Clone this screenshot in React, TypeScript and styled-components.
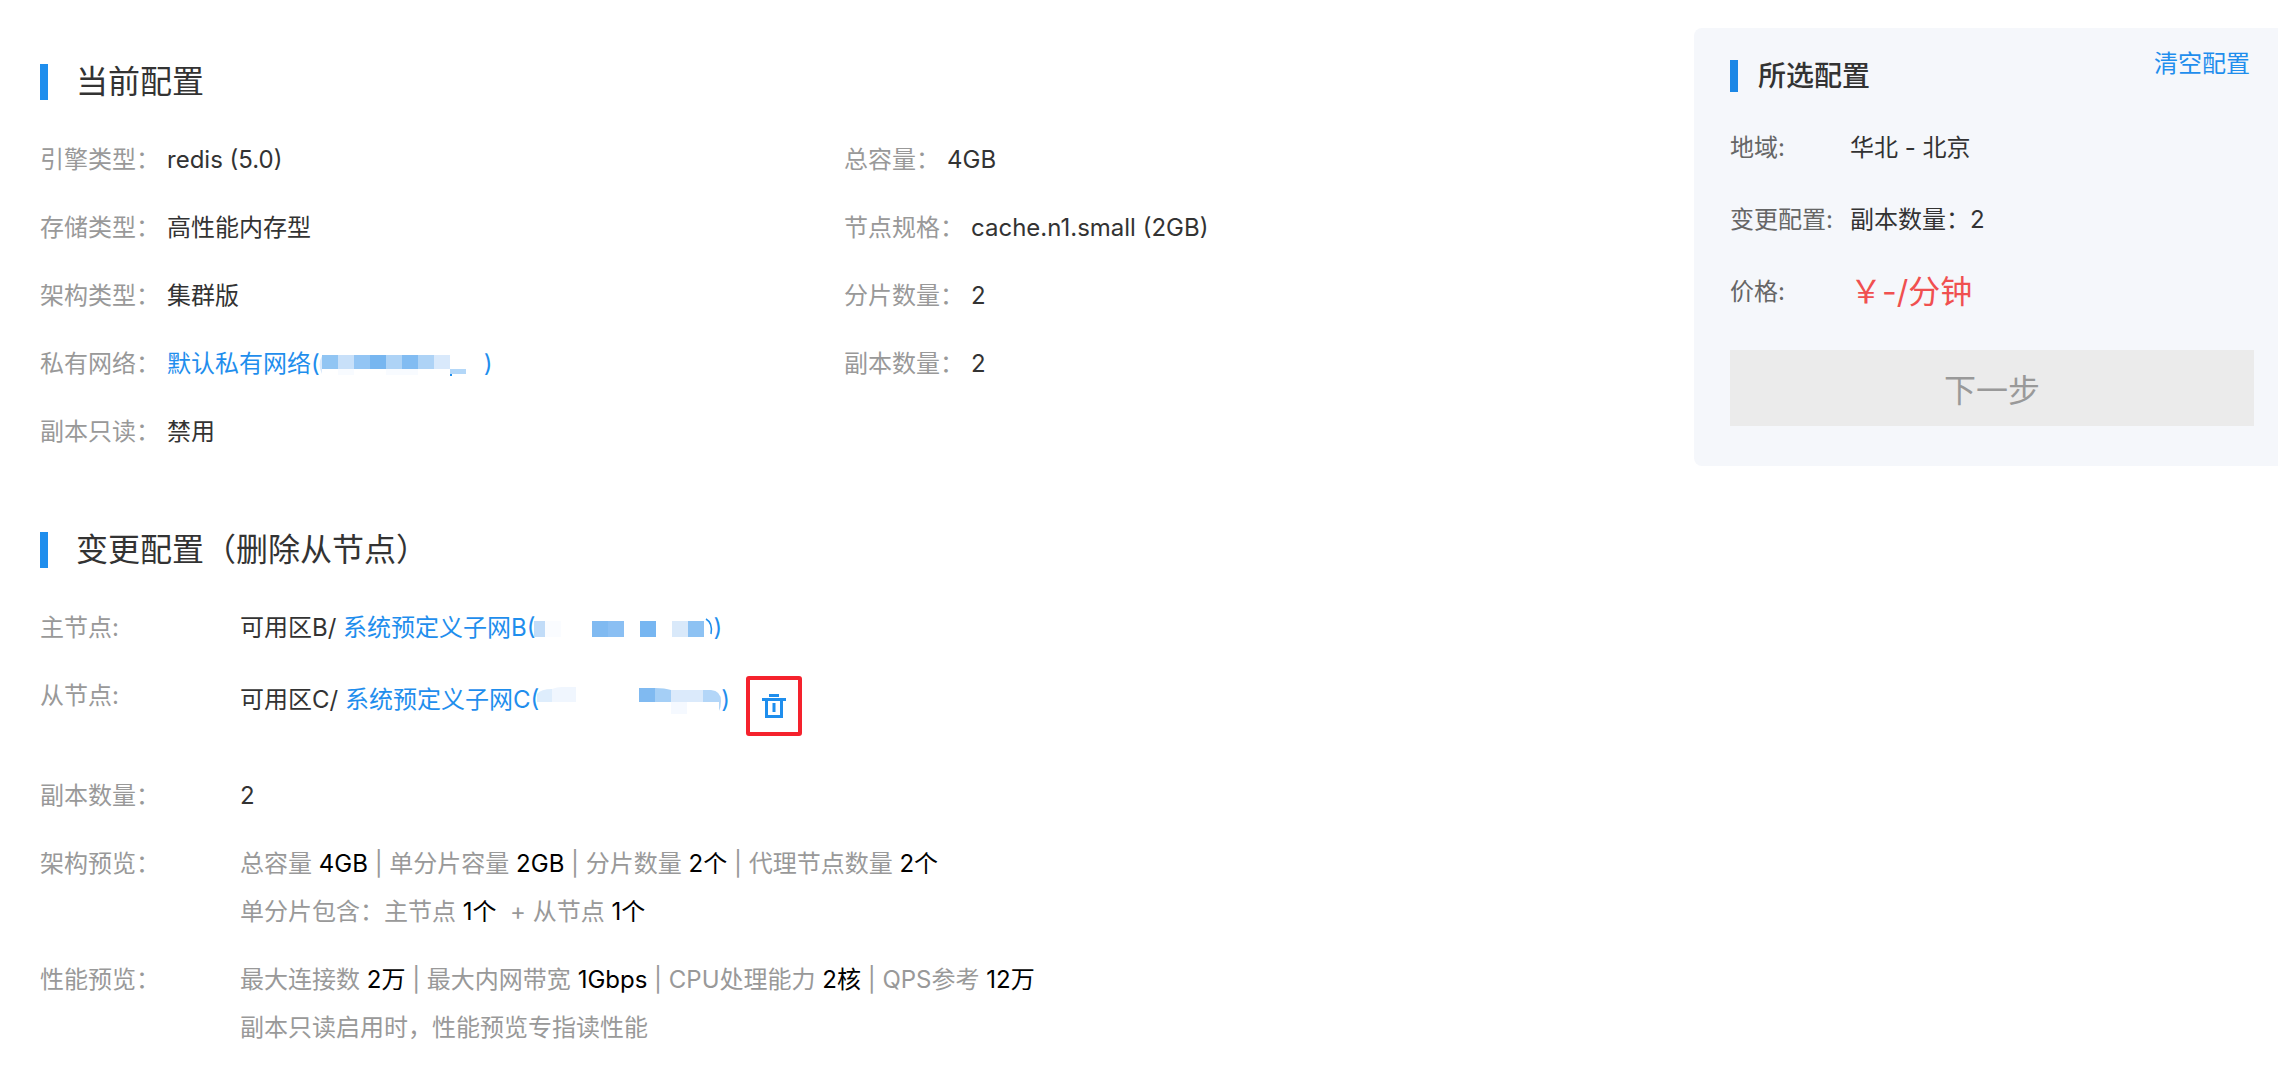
import React from 'react';
import styled, { createGlobalStyle } from 'styled-components';

const GlobalStyle = createGlobalStyle`
  * { box-sizing: border-box; }
  body {
    margin: 0;
    background: #fff;
    color: #333;
    font-family: Inter, "Noto Sans CJK SC", sans-serif;
    font-size: 24px;
    line-height: 48px;
  }
  dl, dd, h2, p { margin: 0; }
`;

const Page = styled.div`
  display: grid;
  grid-template-columns: minmax(0, 1fr) 584px;
  align-items: start;
  column-gap: 46px;
  padding: 28px 0 14px 40px;
`;

const Main = styled.main`
  display: grid;
  gap: 76px;
  padding-top: 36px;
`;

const SectionTitle = styled.h2`
  display: flex;
  align-items: center;
  gap: 28px;
  height: 36px;
  margin-bottom: 36px;
  font-size: 32px;
  font-weight: 400;

  &::before {
    content: '';
    width: 8px;
    height: 36px;
    background: #1f8eed;
  }
`;

const Columns = styled.div`
  display: grid;
  grid-template-columns: 1fr 1fr;
  align-items: start;
`;

const List = styled.dl`
  display: grid;
  gap: 20px;
`;

const Row = styled.div<{ $labelWidth?: number; $minHeight?: number }>`
  display: grid;
  grid-template-columns: ${(p) => (p.$labelWidth ? `${p.$labelWidth}px` : 'auto')} minmax(0, 1fr);
  column-gap: ${(p) => (p.$labelWidth ? 0 : 7)}px;
  align-items: start;
  min-height: ${(p) => p.$minHeight ?? 48}px;
`;

const Label = styled.dt`
  color: #999;
  white-space: nowrap;
`;

const Value = styled.dd`
  white-space: nowrap;
`;

const ActionValue = styled(Value)`
  display: flex;
  align-items: flex-start;
  gap: 16px;
  padding-top: 4px;
`;

const Muted = styled.p`
  color: #999;
`;

const Num = styled.span`
  color: #000;
`;

const Link = styled.a`
  color: #1f8eed;
  text-decoration: none;
`;

const Mask = styled.svg`
  display: inline-block;
  height: 28px;
  margin-left: -2px;
  vertical-align: middle;
`;

const DeleteButton = styled.button`
  display: flex;
  align-items: center;
  justify-content: center;
  width: 56px;
  height: 60px;
  padding: 0;
  border: 4px solid #f5222d;
  border-radius: 3px;
  background: none;
  color: #1f8eed;
`;

const Summary = styled.aside`
  padding: 32px 24px 40px 36px;
  border-radius: 8px 0 0 8px;
  background: #f5f7fb;
`;

const SummaryHead = styled.div`
  display: flex;
  justify-content: space-between;
  align-items: flex-start;
  margin-bottom: 32px;
`;

const SummaryTitle = styled.h2`
  display: flex;
  align-items: center;
  gap: 20px;
  font-size: 28px;
  line-height: 32px;
  font-weight: 500;

  &::before {
    content: '';
    width: 8px;
    height: 32px;
    background: #1b87e6;
  }
`;

const ClearLink = styled(Link)`
  padding-right: 4px;
  line-height: 8px;
`;

const SummaryList = styled.dl`
  display: grid;
  gap: 24px;
  margin-bottom: 34px;
`;

const SummaryLabel = styled(Label)`
  color: #666;
`;

const Price = styled(Value)`
  color: #f05050;
  font-size: 32px;
`;

const NextButton = styled.button`
  display: block;
  width: 100%;
  height: 76px;
  border: 0;
  background: #ebebeb;
  color: #999;
  font-family: inherit;
  font-size: 32px;
`;

type Block = [x: number, y: number, w: number, h: number, fill: string];

const vpcBlocks: Block[] = [
  [4, 4, 16, 14, '#91c5f3'],
  [20, 4, 16, 14, '#c8e0f9'],
  [36, 4, 16, 14, '#93c5f4'],
  [52, 4, 16, 14, '#77b6f0'],
  [68, 4, 16, 14, '#aed3f6'],
  [84, 4, 16, 14, '#82bcf2'],
  [100, 4, 16, 14, '#aed3f6'],
  [116, 4, 16, 14, '#d9e9fb'],
  [20, 18, 16, 6, '#f8fbff'],
  [68, 18, 32, 6, '#f8fbff'],
  [132, 18, 16, 5, '#b3d7f8'],
  [132, 23, 2, 2, '#1f8eed'],
];

const subnetBBlocks: Block[] = [
  [0, 6, 11, 16, '#c1dcf8'],
  [11, 6, 16, 16, '#fafcff'],
  [58, 6, 16, 16, '#80baf1'],
  [74, 6, 16, 16, '#8abff3'],
  [106, 6, 16, 16, '#77b6f1'],
  [138, 6, 16, 16, '#d9e9fa'],
  [154, 6, 16, 16, '#8dc2f3'],
];

function MaskedText({ width, blocks, children }: { width: number; blocks: Block[]; children?: React.ReactNode }) {
  return (
    <Mask width={width} height={28} viewBox={`0 0 ${width} 28`} aria-hidden="true">
      {blocks.map(([x, y, w, h, fill]) => (
        <rect key={`${x}-${y}`} x={x} y={y} width={w} height={h} fill={fill} />
      ))}
      {children}
    </Mask>
  );
}

function TrashIcon() {
  return (
    <svg width="24" height="24" viewBox="0 0 24 24" fill="currentColor" aria-hidden="true">
      <path d="M7 0h10v3H7zM0 4h24v3h-3v17H3V7H0zM6 7v14h12V7zM10.500 9h3v9h-3z" fillRule="evenodd" />
    </svg>
  );
}

const currentLeft: [string, React.ReactNode][] = [
  ['引擎类型：', 'redis (5.0)'],
  ['存储类型：', '高性能内存型'],
  ['架构类型：', '集群版'],
  [
    '私有网络：',
    <Link href="#vpc">
      默认私有网络(
      <MaskedText width={166} blocks={vpcBlocks}>
        <path d="M4 5Q-1 13 4 23V5z" fill="#d9e9fb" />
      </MaskedText>
      )
    </Link>,
  ],
  ['副本只读：', '禁用'],
];

const currentRight: [string, string][] = [
  ['总容量：', '4GB'],
  ['节点规格：', 'cache.n1.small (2GB)'],
  ['分片数量：', '2'],
  ['副本数量：', '2'],
];

function Pairs({ items }: { items: [string, React.ReactNode][] }) {
  return (
    <List>
      {items.map(([label, value]) => (
        <Row key={label}>
          <Label>{label}</Label>
          <Value>{value}</Value>
        </Row>
      ))}
    </List>
  );
}

export default function App() {
  return (
    <>
      <GlobalStyle />
      <Page lang="zh-CN">
        <Main>
          <section>
            <SectionTitle>当前配置</SectionTitle>
            <Columns>
              <Pairs items={currentLeft} />
              <Pairs items={currentRight} />
            </Columns>
          </section>

          <section>
            <SectionTitle>变更配置（删除从节点）</SectionTitle>
            <List>
              <Row $labelWidth={200}>
                <Label>主节点:</Label>
                <Value>
                  可用区B/{' '}
                  <Link href="#subnet-b">
                    系统预定义子网B(
                    <MaskedText width={180} blocks={subnetBBlocks}>
                      <path d="M172 4Q179 8 177 19" fill="none" stroke="#1f8eed" strokeWidth="1.500" />
                    </MaskedText>
                    )
                  </Link>
                </Value>
              </Row>
              <Row $labelWidth={200} $minHeight={80}>
                <Label>从节点:</Label>
                <ActionValue>
                  <span>
                    可用区C/{' '}
                    <Link href="#subnet-c">
                      系统预定义子网C(
                      <MaskedText width={184} blocks={[]}>
                        <path d="M0 15V7Q4 2 15 2V15z" fill="#deedfc" />
                        <path d="M15 15V2Q20 0 25 0H39V15z" fill="#f0f6fe" />
                        <path d="M102 1H118V15H102z" fill="#80baf1" />
                        <path d="M118 1Q128 1 134 3V15H118z" fill="#a5cff6" />
                        <path d="M134 3H166V15H134z" fill="#dbeafb" />
                        <path d="M134 15H150V27H134z" fill="#f5f9ff" />
                        <path d="M166 3H174Q184 4 184 14Q184 20 182 24V15H166z" fill="#b3d6f8" />
                      </MaskedText>
                      )
                    </Link>
                  </span>
                  <DeleteButton type="button" aria-label="删除从节点">
                    <TrashIcon />
                  </DeleteButton>
                </ActionValue>
              </Row>
              <Row $labelWidth={200}>
                <Label>副本数量：</Label>
                <Value>2</Value>
              </Row>
              <Row $labelWidth={200}>
                <Label>架构预览：</Label>
                <Value>
                  <Muted>
                    总容量 <Num>4GB</Num> | 单分片容量 <Num>2GB</Num> | 分片数量 <Num>2个</Num> | 代理节点数量 <Num>2个</Num>
                  </Muted>
                  <Muted>
                    单分片包含：主节点 <Num>1个</Num> &nbsp;+ 从节点 <Num>1个</Num>
                  </Muted>
                </Value>
              </Row>
              <Row $labelWidth={200}>
                <Label>性能预览：</Label>
                <Value>
                  <Muted>
                    最大连接数 <Num>2万</Num> | 最大内网带宽 <Num>1Gbps</Num> | CPU处理能力 <Num>2核</Num> | QPS参考 <Num>12万</Num>
                  </Muted>
                  <Muted>副本只读启用时，性能预览专指读性能</Muted>
                </Value>
              </Row>
            </List>
          </section>
        </Main>

        <Summary>
          <SummaryHead>
            <SummaryTitle>所选配置</SummaryTitle>
            <ClearLink href="#clear">清空配置</ClearLink>
          </SummaryHead>
          <SummaryList>
            <Row $labelWidth={120}>
              <SummaryLabel>地域:</SummaryLabel>
              <Value>华北 - 北京</Value>
            </Row>
            <Row $labelWidth={120}>
              <SummaryLabel>变更配置:</SummaryLabel>
              <Value>副本数量：2</Value>
            </Row>
            <Row $labelWidth={120}>
              <SummaryLabel>价格:</SummaryLabel>
              <Price>￥-/分钟</Price>
            </Row>
          </SummaryList>
          <NextButton type="button" disabled>
            下一步
          </NextButton>
        </Summary>
      </Page>
    </>
  );
}
